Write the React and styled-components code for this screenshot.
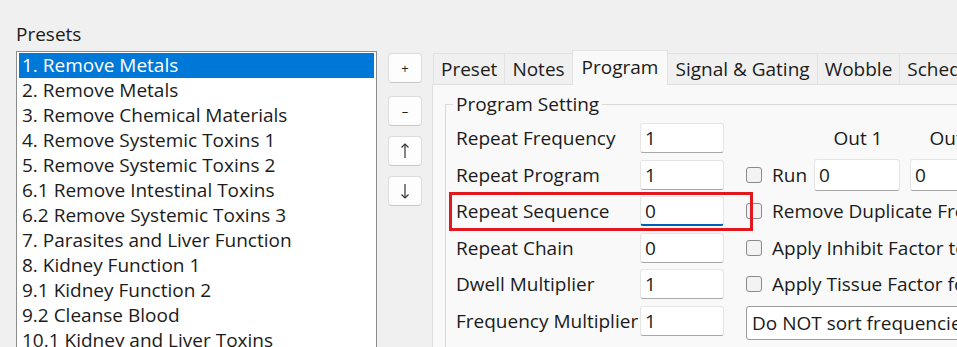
import React from "react";
import styled, { createGlobalStyle } from "styled-components";

const Global = createGlobalStyle`
  html, body { margin: 0; padding: 0; background: #f0f0f0; overflow: hidden; }
  body { font-family: "Open Sans", "Noto Sans", sans-serif; font-size: 19px; color: #1b1b1b; }
  * { box-sizing: border-box; }
`;

const Window = styled.div`
  display: flex;
  align-items: flex-start;
  height: 347px;
  padding-left: 16px;
  overflow: hidden;
`;

const LeftColumn = styled.div`
  display: flex;
  flex-direction: column;
  padding-top: 21px;
`;

const Caption = styled.div`
  line-height: 26px;
  margin-bottom: 4px;
`;

const ListBox = styled.ul`
  list-style: none;
  margin: 0;
  width: 361px;
  height: 320px;
  padding: 1px 1px;
  background: #fff;
  border: 1px solid #8c8c8c;
  overflow: hidden;
`;

const ListItem = styled.li`
  height: 25px;
  line-height: 25px;
  margin: 0 1px;
  padding-left: 3px;
  white-space: nowrap;
  background: ${(p) => (p.$selected ? "#0078d7" : "transparent")};
  color: ${(p) => (p.$selected ? "#fff" : "#1b1b1b")};
`;

const ButtonColumn = styled.div`
  display: flex;
  flex-direction: column;
  gap: 10px;
  margin-left: 11px;
  padding-top: 53px;

  & > :first-child { margin-bottom: 3px; }
`;

const SmallButton = styled.button`
  width: 34px;
  height: 30px;
  padding: 0;
  display: flex;
  align-items: center;
  justify-content: center;
  background: #fdfdfd;
  border: 1px solid #dcdcdc;
  border-bottom-color: #c8c8c8;
  border-radius: 4px;
  font-family: "Open Sans", sans-serif;
  font-size: 13px;
  color: #222;
`;

const TabControl = styled.div`
  flex: 1;
  min-width: 0;
  margin-left: 10px;
  padding-top: 51px;
  display: flex;
  flex-direction: column;
`;

const TabStrip = styled.div`
  display: flex;
  align-items: flex-end;
  height: 34px;
  padding-left: 2px;
  position: relative;
  z-index: 1;
  margin-bottom: -1px;
`;

const Tab = styled.div`
  height: ${(p) => (p.$active ? "35px" : "31px")};
  line-height: ${(p) => (p.$active ? "33px" : "31px")};
  margin-bottom: ${(p) => (p.$active ? "0" : "1px")};
  padding: 0 ${(p) => (p.$active ? "9px" : "7px")};
  margin-left: -1px;
  white-space: nowrap;
  background: ${(p) => (p.$active ? "#f9f9f9" : "#f0f0f0")};
  border: 1px solid #e2e2e2;
  border-bottom: none;
  ${(p) => (p.$active ? "position: relative; z-index: 2;" : "")}
`;

const Panel = styled.div`
  flex: 1;
  background: #f9f9f9;
  border: 1px solid #e0e0e0;
  border-right: none;
  padding: 7px 0 0 12px;
  height: 300px;
`;

const GroupBox = styled.fieldset`
  margin: 0;
  padding: 7px 0 0 10px;
  border: 1px solid #dadada;
  border-right: none;
  border-bottom: none;
  min-width: 0;
  height: 290px;
`;

const Legend = styled.legend`
  margin-left: -3px;
  padding: 0 3px;
  line-height: 24px;
`;

const Rows = styled.div`
  display: flex;
  flex-direction: column;
  gap: 6.6px;
`;

const Row = styled.div`
  position: relative;
  display: flex;
  align-items: center;
  height: 30px;
  white-space: nowrap;
`;

const FieldLabel = styled.div`
  width: 184px;
  flex-shrink: 0;
`;

const TextBox = styled.div`
  width: ${(p) => p.$w || 84}px;
  height: ${(p) => p.$h || 30}px;
  flex-shrink: 0;
  display: flex;
  align-items: center;
  padding-left: 4px;
  margin-left: ${(p) => p.$gap || 0}px;
  background: #fff;
  border: 1px solid #e5e5e5;
  border-bottom: ${(p) => (p.$focused ? "2px solid #005fb8" : "1px solid #a8a8a8")};
  border-radius: 3px;
`;

const Side = styled.div`
  display: flex;
  align-items: center;
  margin-left: 22px;
`;

const CheckBox = styled.span`
  width: 16px;
  height: 16px;
  flex-shrink: 0;
  border: 1px solid #8a8a8a;
  border-radius: 3px;
  background: #f3f3f3;
  margin-right: 10px;
`;

const OutHeader = styled.div`
  width: 86px;
  text-align: center;
  margin-left: ${(p) => p.$offset || 0}px;
`;

const Select = styled.div`
  width: 330px;
  height: 34px;
  margin-top: 4px;
  display: flex;
  align-items: center;
  padding-left: 5px;
  background: #fff;
  border: 1px solid #9c9c9c;
  border-radius: 3px;
`;

const Highlight = styled.div`
  position: absolute;
  left: -7px;
  top: -4px;
  width: 304px;
  height: 39px;
  border: 3px solid #e1191f;
  pointer-events: none;
`;

const Arrow = ({ down }) => (
  <svg width="10" height="18" viewBox="0 0 10 18" fill="none" stroke="#333" strokeWidth="1.2">
    {down ? (
      <>
        <path d="M5 2v14" />
        <path d="M1.5 12.5L5 16l3.5-3.5" />
      </>
    ) : (
      <>
        <path d="M5 16V2" />
        <path d="M1.5 5.5L5 2l3.5 3.5" />
      </>
    )}
  </svg>
);

const presets = [
  "1. Remove Metals",
  "2. Remove Metals",
  "3. Remove Chemical Materials",
  "4. Remove Systemic Toxins 1",
  "5. Remove Systemic Toxins 2",
  "6.1 Remove Intestinal Toxins",
  "6.2 Remove Systemic Toxins 3",
  "7. Parasites and Liver Function",
  "8. Kidney Function 1",
  "9.1 Kidney Function 2",
  "9.2 Cleanse Blood",
  "10.1 Kidney and Liver Toxins",
  "10.2 Kidney Function 3",
];

const tabs = ["Preset", "Notes", "Program", "Signal & Gating", "Wobble", "Schedule"];

export default function App() {
  return (
    <>
      <Global />
      <Window>
        <LeftColumn>
          <Caption>Presets</Caption>
          <ListBox>
            {presets.map((p, i) => (
              <ListItem key={p + i} $selected={i === 0}>{p}</ListItem>
            ))}
          </ListBox>
        </LeftColumn>

        <ButtonColumn>
          <SmallButton>+</SmallButton>
          <SmallButton>–</SmallButton>
          <SmallButton><Arrow /></SmallButton>
          <SmallButton><Arrow down /></SmallButton>
        </ButtonColumn>

        <TabControl>
          <TabStrip>
            {tabs.map((t) => (
              <Tab key={t} $active={t === "Program"}>{t}</Tab>
            ))}
          </TabStrip>
          <Panel>
            <GroupBox>
              <Legend>Program Setting</Legend>
              <Rows>
                <Row>
                  <FieldLabel>Repeat Frequency</FieldLabel>
                  <TextBox>1</TextBox>
                  <Side>
                    <OutHeader $offset={69}>Out 1</OutHeader>
                    <OutHeader $offset={10}>Out 2</OutHeader>
                  </Side>
                </Row>
                <Row>
                  <FieldLabel>Repeat Program</FieldLabel>
                  <TextBox>1</TextBox>
                  <Side>
                    <CheckBox />
                    <span>Run</span>
                    <TextBox $w={86} $h={32} $gap={7}>0</TextBox>
                    <TextBox $w={86} $h={32} $gap={10}>0</TextBox>
                  </Side>
                </Row>
                <Row>
                  <FieldLabel>Repeat Sequence</FieldLabel>
                  <TextBox $focused>0</TextBox>
                  <Side>
                    <CheckBox />
                    <span>Remove Duplicate Frequencies</span>
                  </Side>
                  <Highlight />
                </Row>
                <Row>
                  <FieldLabel>Repeat Chain</FieldLabel>
                  <TextBox>0</TextBox>
                  <Side>
                    <CheckBox />
                    <span>Apply Inhibit Factor to Frequencies</span>
                  </Side>
                </Row>
                <Row>
                  <FieldLabel>Dwell Multiplier</FieldLabel>
                  <TextBox>1</TextBox>
                  <Side>
                    <CheckBox />
                    <span>Apply Tissue Factor for Frequencies</span>
                  </Side>
                </Row>
                <Row>
                  <FieldLabel>Frequency Multiplier</FieldLabel>
                  <TextBox>1</TextBox>
                  <Side>
                    <Select>Do NOT sort frequencies</Select>
                  </Side>
                </Row>
              </Rows>
            </GroupBox>
          </Panel>
        </TabControl>
      </Window>
    </>
  );
}
